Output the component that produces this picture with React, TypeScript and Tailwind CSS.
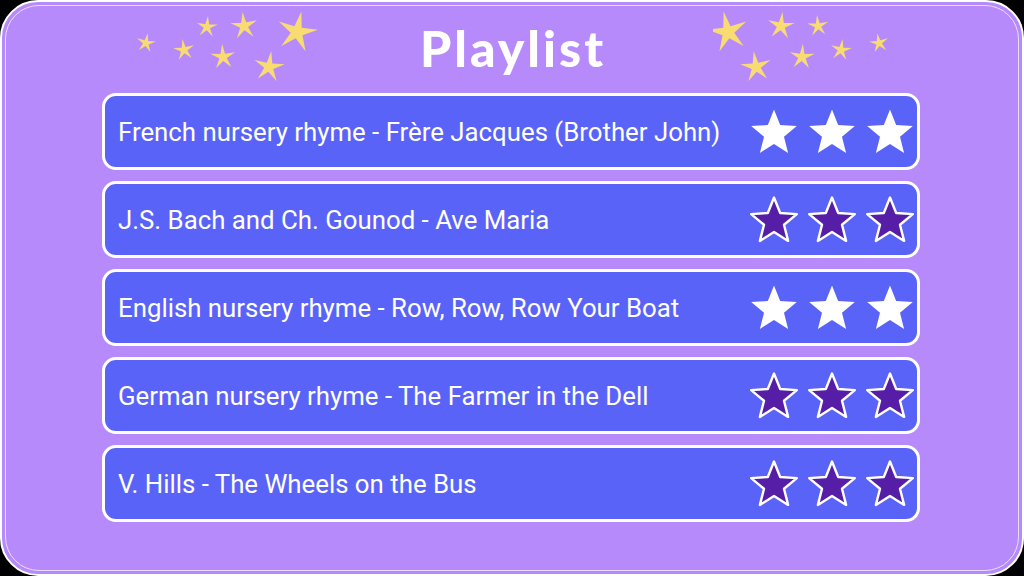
import React from "react";

type Song = { title: string; filled: boolean };

const songs: Song[] = [
  { title: "French nursery rhyme - Frère Jacques (Brother John)", filled: true },
  { title: "J.S. Bach and Ch. Gounod - Ave Maria", filled: false },
  { title: "English nursery rhyme - Row, Row, Row Your Boat", filled: true },
  { title: "German nursery rhyme - The Farmer in the Dell", filled: false },
  { title: "V. Hills - The Wheels on the Bus", filled: false },
];

// five-point star polygon centred on (cx, cy)
function starPoints(cx: number, cy: number, outer: number, inner: number) {
  const pts: string[] = [];
  for (let i = 0; i < 10; i++) {
    const r = i % 2 === 0 ? outer : inner;
    const a = -Math.PI / 2 + (i * Math.PI) / 5;
    pts.push(`${(cx + r * Math.cos(a)).toFixed(2)},${(cy + r * Math.sin(a)).toFixed(2)}`);
  }
  return pts.join(" ");
}

function RatingStar({ filled }: { filled: boolean }) {
  return (
    <svg width="50" height="48" viewBox="0 0 50 48">
      <polygon
        points={starPoints(25, 25.5, 24, 10.5)}
        fill={filled ? "#ffffff" : "#561ea6"}
        stroke="#ffffff"
        strokeWidth={filled ? 0 : 2.4}
        strokeLinejoin="round"
      />
    </svg>
  );
}

type Sparkle = { x: number; y: number; r: number; rot: number };

const leftSparkles: Sparkle[] = [
  { x: 12, y: 43, r: 10, rot: 10 },
  { x: 50, y: 50, r: 11, rot: -8 },
  { x: 73, y: 27, r: 11, rot: 5 },
  { x: 110, y: 26, r: 14, rot: -6 },
  { x: 163, y: 32, r: 21, rot: 12 },
  { x: 89, y: 57, r: 13, rot: -4 },
  { x: 135, y: 67, r: 16, rot: 8 },
];

const rightSparkles: Sparkle[] = [
  { x: 15, y: 32, r: 21, rot: -12 },
  { x: 68, y: 26, r: 14, rot: 6 },
  { x: 105, y: 26, r: 11, rot: -5 },
  { x: 166, y: 43, r: 10, rot: -10 },
  { x: 43, y: 67, r: 16, rot: -8 },
  { x: 89, y: 57, r: 13, rot: 4 },
  { x: 128, y: 50, r: 11, rot: 8 },
];

function SparkleCluster({ items }: { items: Sparkle[] }) {
  return (
    <svg width="184" height="90" viewBox="0 0 184 90">
      {items.map((s, i) => (
        <polygon
          key={i}
          points={starPoints(s.x, s.y, s.r, s.r * 0.3)}
          fill="#f8dc72"
          transform={`rotate(${s.rot} ${s.x} ${s.y})`}
        />
      ))}
    </svg>
  );
}

export default function App() {
  return (
    <div className="w-[1024px] h-[576px] bg-black overflow-hidden">
      <div className="w-full h-full rounded-[38px] border-2 border-white bg-[#b78afc] p-[3px]">
        <div className="w-full h-full rounded-[34px] border border-[#ecdcff] flex flex-col items-center">
          <div className="relative w-full h-[87px] flex items-center justify-center">
            <div className="absolute left-[128px] top-[-6px]">
              <SparkleCluster items={leftSparkles} />
            </div>
            <div className="absolute left-[707px] top-[-6px]">
              <SparkleCluster items={rightSparkles} />
            </div>
            <h1
              className="text-white text-[50px] font-black tracking-[3px] leading-none mt-[-4px] ml-[2px]"
              style={{ fontFamily: "Lato, 'Open Sans', sans-serif" }}
            >
              Playlist
            </h1>
          </div>
          <div className="w-[818px] flex flex-col gap-[11px] ml-[-2px]">
            {songs.map((s) => (
              <div
                key={s.title}
                className="h-[77px] rounded-[14px] border-[3px] border-white bg-[#5a63f8] flex items-center justify-between pl-[13px] pr-[2px]"
              >
                <span
                  className="text-white text-[25.8px] leading-none pt-[3px]"
                  style={{ fontFamily: "Roboto, 'Noto Sans', sans-serif" }}
                >
                  {s.title}
                </span>
                <div className="flex items-center gap-[8px]">
                  <RatingStar filled={s.filled} />
                  <RatingStar filled={s.filled} />
                  <RatingStar filled={s.filled} />
                </div>
              </div>
            ))}
          </div>
        </div>
      </div>
    </div>
  );
}
